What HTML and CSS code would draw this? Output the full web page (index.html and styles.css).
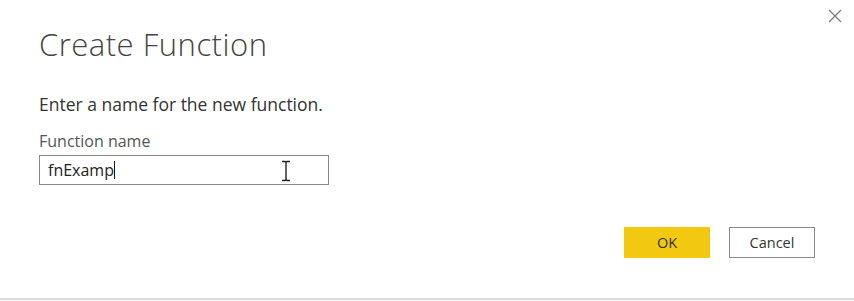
FILE: index.html
```html
<!DOCTYPE html>
<html lang="en">
<head>
    <meta charset="UTF-8">
    <meta name="viewport" content="width=device-width, initial-scale=1.0">
    <title>Create Function</title>
    <link rel="stylesheet" href="styles.css">
</head>
<body>
    <div class="dialog">
        <button class="close" title="Close">
            <svg width="14" height="14" viewBox="0 0 14 14"><path d="M1 1 L13 13 M13 1 L1 13" stroke="#7a7a7a" stroke-width="1.3" fill="none"/></svg>
        </button>
        <h1 class="title">Create Function</h1>
        <p class="intro">Enter a name for the new function.</p>
        <label class="field-label">Function name</label>
        <div class="field">
            <span class="value">fnExamp</span><span class="caret"></span>
            <svg class="ibeam" width="10" height="22" viewBox="0 0 10 22"><path d="M1 1.5 H4 Q5 1.5 5 3 V19 Q5 20.5 4 20.5 H1 M9 1.5 H6 Q5 1.5 5 3 V19 Q5 20.5 6 20.5 H9" stroke="#222" stroke-width="1.4" fill="none"/></svg>
        </div>
        <div class="actions">
            <button class="btn btn-ok">OK</button>
            <button class="btn btn-cancel">Cancel</button>
        </div>
    </div>
</body>
</html>
```

FILE: styles.css
```css
body {
    margin: 0;
    background-color: #fff;
    font-family: "Open Sans", "Noto Sans", sans-serif;
    color: #333;
}

.dialog {
    position: relative;
    height: 298px;
    border-bottom: 2px solid #dcdcdc;
    padding: 0 39px;
}

.close {
    position: absolute;
    top: 9px;
    right: 12px;
    border: none;
    background: none;
    padding: 0;
    line-height: 0;
}

.title {
    margin: 0;
    padding-top: 22px;
    font-size: 31px;
    font-weight: 300;
    letter-spacing: 0.5px;
    color: #444;
    line-height: 44px;
}

.intro {
    margin: 28px 0 0 0;
    font-size: 17.5px;
    line-height: 20px;
    color: #333;
}

.field-label {
    display: block;
    margin-top: 17px;
    font-size: 16px;
    line-height: 20px;
    color: #555;
}

.field {
    position: relative;
    box-sizing: border-box;
    width: 290px;
    height: 30px;
    margin-top: 4px;
    border: 1px solid #8a8a8a;
    padding: 0 8px;
    font-size: 16px;
    line-height: 28px;
    color: #222;
}

.caret {
    display: inline-block;
    width: 1px;
    height: 18px;
    background-color: #111;
    vertical-align: middle;
    margin-top: -3px;
}

.ibeam {
    position: absolute;
    left: 241px;
    top: 4px;
}

.actions {
    display: flex;
    justify-content: flex-end;
    gap: 19px;
    margin-top: 42px;
}

.btn {
    box-sizing: border-box;
    width: 86px;
    height: 31px;
    font-family: "Open Sans", "Noto Sans", sans-serif;
    font-size: 14.5px;
    color: #333;
    padding: 0;
}

.btn-ok {
    background-color: #f2c811;
    border: none;
}

.btn-cancel {
    background-color: #fff;
    border: 1px solid #8a8a8a;
}
```
